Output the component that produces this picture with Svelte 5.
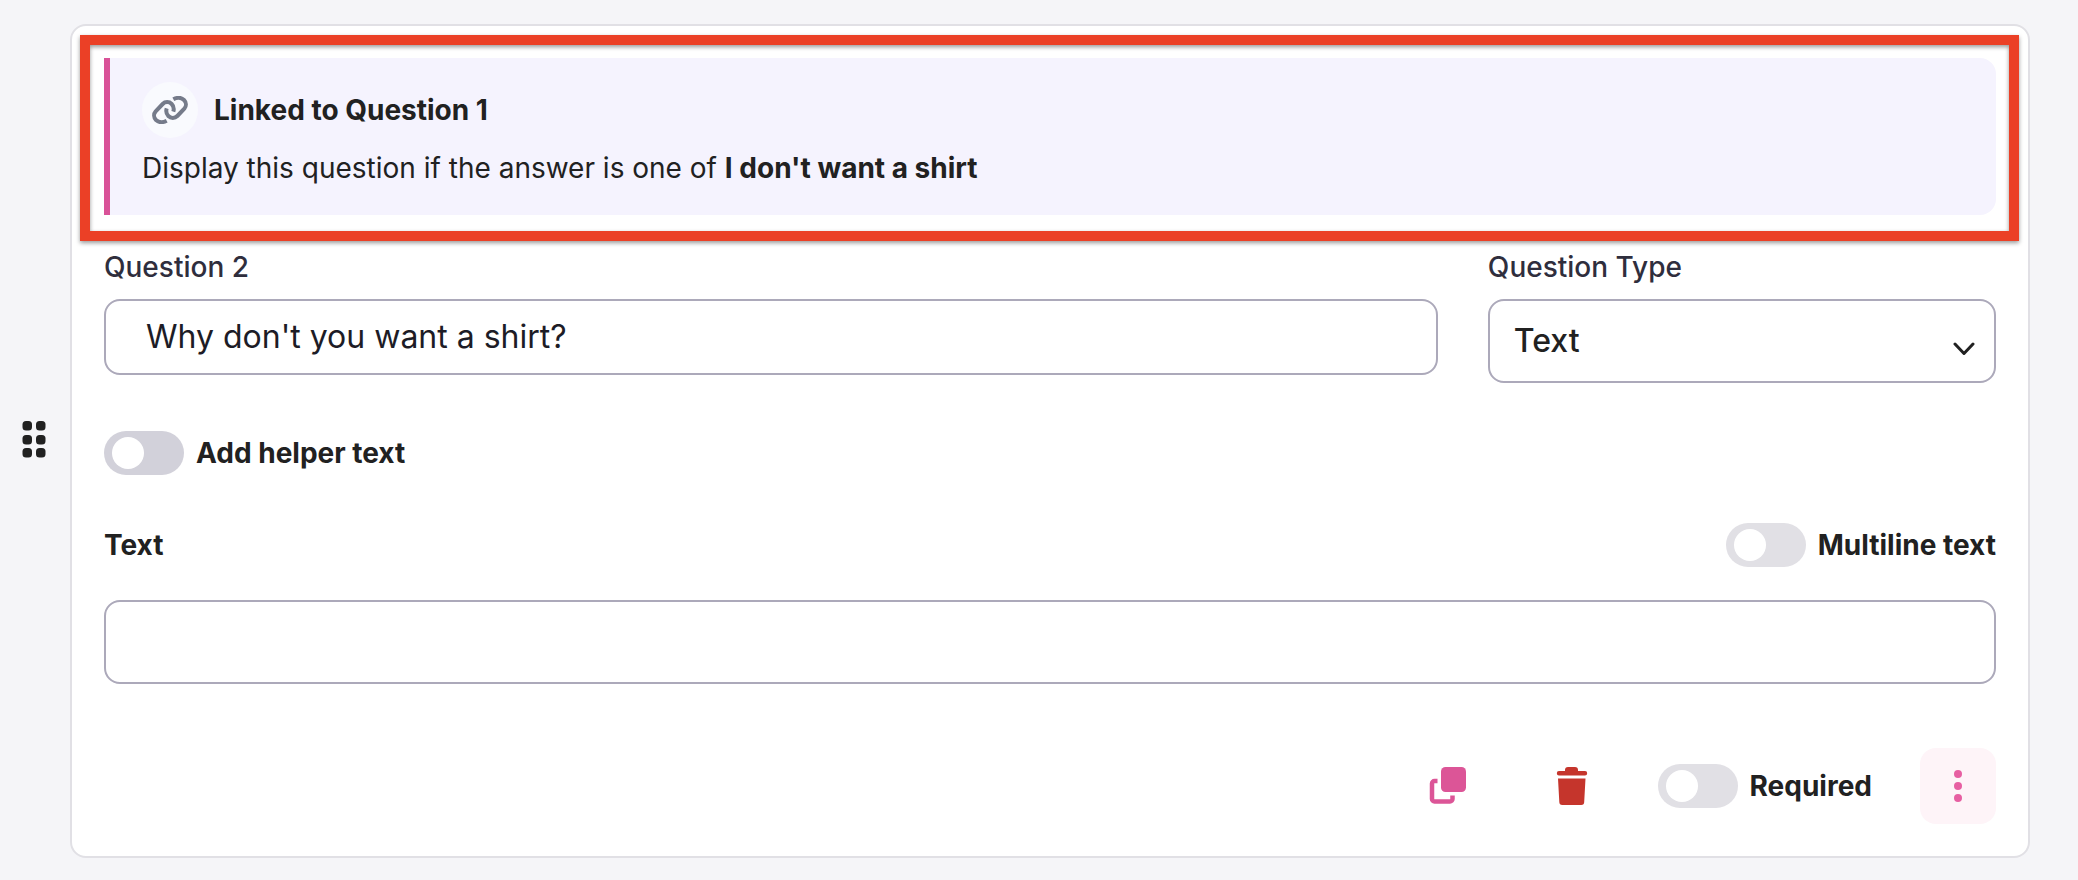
<script lang="ts">
  let question = "Why don't you want a shirt?";
  let questionType = 'Text';
  let answer = '';
  let helperText = false;
  let multiline = false;
  let required = false;

  const questionTypes = ['Text', 'Number', 'Date', 'Dropdown', 'Checkbox'];
</script>

<div class="question">
  <button class="drag" type="button" aria-label="Reorder question">
    <svg width="24" height="37" viewBox="0 0 24 37" fill="currentColor">
      {#each [0, 14, 27] as y}
        <rect x="0.500" {y} width="9.500" height="9.500" rx="3.500" />
        <rect x="14" {y} width="9.500" height="9.500" rx="3.500" />
      {/each}
    </svg>
  </button>

  <section class="card">
    <div class="linked">
      <div class="callout">
        <div class="callout-title">
          <span class="callout-icon">
            <svg
              width="36"
              height="28"
              viewBox="0 0 108 84"
              fill="none"
              stroke="currentColor"
              stroke-width="12"
              stroke-linejoin="round"
              aria-hidden="true"
            >
              <path d="M44 74Q25 84 12 72A19 19 0 0 1 11 46L32 24A19 19 0 0 1 59 24Q68 33 64 47" />
              <path
                d="M44 74Q25 84 12 72A19 19 0 0 1 11 46L32 24A19 19 0 0 1 59 24Q68 33 64 47"
                transform="rotate(180 54 42)"
              />
            </svg>
          </span>
          <strong>Linked to Question 1</strong>
        </div>
        <p>Display this question if the answer is one of <strong>I don't want a shirt</strong></p>
      </div>
    </div>

    <div class="fields">
      <div class="field">
        <label for="question">Question 2</label>
        <input id="question" class="box question-input" type="text" bind:value={question} />
      </div>
      <div class="field">
        <label for="question-type">Question Type</label>
        <div class="select-wrapper">
          <select id="question-type" class="box" bind:value={questionType}>
            {#each questionTypes as type}
              <option>{type}</option>
            {/each}
          </select>
          <svg class="chevron" width="22" height="14" viewBox="0 0 22 14" aria-hidden="true">
            <path
              d="M2 2l9 9.500 9-9.500"
              fill="none"
              stroke="currentColor"
              stroke-width="3"
              stroke-linecap="round"
              stroke-linejoin="round"
            />
          </svg>
        </div>
      </div>
    </div>

    <div class="row">
      <label class="toggle strong">
        <input type="checkbox" bind:checked={helperText} />
        <span>Add helper text</span>
      </label>
    </div>

    <div class="row">
      <label class="answer-label" for="answer">Text</label>
      <label class="toggle">
        <input type="checkbox" bind:checked={multiline} />
        <span>Multiline text</span>
      </label>
    </div>

    <input id="answer" class="box answer" type="text" bind:value={answer} />

    <div class="actions">
      <button class="icon-btn copy" type="button" aria-label="Duplicate question">
        <svg width="38" height="38" viewBox="0 0 38 38" aria-hidden="true">
          <rect x="12" y="0" width="25" height="25" rx="4.500" fill="currentColor" />
          <path
            d="M8.500 14H5.500a2.500 2.500 0 0 0-2.500 2.500v15.500a2.500 2.500 0 0 0 2.500 2.500h15.500a2.500 2.500 0 0 0 2.500-2.500v-3.500"
            fill="none"
            stroke="currentColor"
            stroke-width="4.500"
          />
        </svg>
      </button>
      <button class="icon-btn trash" type="button" aria-label="Delete question">
        <svg width="32" height="38" viewBox="0 0 32 38" fill="currentColor" aria-hidden="true">
          <path
            d="M9 4V3a3 3 0 0 1 3-3h7a3 3 0 0 1 3 3v1h7a2.200 2.200 0 0 1 0 4.400H3A2.200 2.200 0 0 1 3 4z"
          />
          <path d="M2 11.400h27.500l-1.300 23.600a3 3 0 0 1-3 3H6.300a3 3 0 0 1-3-3z" />
        </svg>
      </button>
      <label class="toggle">
        <input type="checkbox" bind:checked={required} />
        <span>Required</span>
      </label>
      <button class="icon-btn more" type="button" aria-label="More options">
        <svg width="8" height="32" viewBox="0 0 8 32" fill="currentColor" aria-hidden="true">
          <circle cx="4" cy="4" r="4" />
          <circle cx="4" cy="16" r="4" />
          <circle cx="4" cy="28" r="4" />
        </svg>
      </button>
    </div>
  </section>
</div>

<style>
  :global(body) {
    background: #f5f5f8;
  }

  .question {
    display: flex;
    padding: 24px 48px 22px 0;
    font-family: Inter, "Liberation Sans", sans-serif;
    font-size: 28px;
    line-height: 34px;
    color: #212121;
  }

  button {
    border: none;
    background: none;
    padding: 0;
    cursor: pointer;
  }

  .drag {
    flex: none;
    width: 70px;
    padding: 0 0 4px 22px;
    color: #212121;
    cursor: grab;
  }

  svg {
    display: block;
  }

  .card {
    flex: 1;
    min-width: 0;
    box-sizing: border-box;
    background: #fff;
    border: 2px solid #e1e0e5;
    border-radius: 16px;
    padding: 32px;
  }

  .linked {
    position: relative;
    margin-bottom: 35px;
  }

  .linked::after {
    content: "";
    position: absolute;
    inset: -23px -23px -26px -24px;
    border: 10px solid #eb4026;
    filter: drop-shadow(0 2px 2px rgba(0, 0, 0, 0.4));
    pointer-events: none;
  }

  .callout {
    display: flex;
    flex-direction: column;
    gap: 9px;
    background: #f5f3fe;
    border-left: 6px solid #d95298;
    border-radius: 0 16px 16px 0;
    padding: 24px 32px 26px;
  }

  .callout-title {
    display: flex;
    align-items: center;
    gap: 16px;
  }

  .callout-icon {
    display: flex;
    align-items: center;
    justify-content: center;
    width: 56px;
    height: 56px;
    border-radius: 50%;
    background: #f9fafe;
    color: #757b8a;
  }

  .callout p {
    margin: 0;
    line-height: 42px;
  }

  strong {
    font-weight: 700;
  }

  .fields {
    display: grid;
    grid-template-columns: 21fr 8fr;
    gap: 50px;
  }

  .field {
    display: flex;
    flex-direction: column;
    gap: 15px;
  }

  .field label {
    font-weight: 500;
    color: #2f2e3d;
  }

  .box {
    display: block;
    box-sizing: border-box;
    width: 100%;
    height: 84px;
    border: 2px solid #aca9ba;
    border-radius: 16px;
    background: #fff;
    color: #212121;
    font-family: inherit;
    font-size: 32px;
    padding: 0 24px 2px;
  }

  .question-input {
    height: 76px;
    padding: 0 40px 2px;
    color: #1d1c26;
  }

  .select-wrapper {
    position: relative;
  }

  select {
    appearance: none;
    font-weight: 500;
  }

  .chevron {
    position: absolute;
    right: 21px;
    top: 43px;
    pointer-events: none;
  }

  .row {
    display: flex;
    align-items: center;
    justify-content: space-between;
    margin-top: 48px;
  }

  .answer-label {
    font-weight: 700;
  }

  .answer {
    margin-top: 33px;
  }

  .toggle {
    display: flex;
    align-items: center;
    gap: 12px;
    font-weight: 700;
    cursor: pointer;
  }

  .toggle input {
    appearance: none;
    display: flex;
    align-items: center;
    box-sizing: border-box;
    width: 80px;
    height: 44px;
    margin: 0;
    padding: 0 8px;
    border-radius: 22px;
    background: #e1e0e5;
    cursor: pointer;
  }

  .toggle.strong input {
    background: #d2d1da;
  }

  .toggle input::before {
    content: "";
    width: 32px;
    height: 32px;
    border-radius: 50%;
    background: #fff;
  }

  .toggle input:checked {
    justify-content: flex-end;
    background: #dc5597;
  }

  .actions {
    display: flex;
    align-items: center;
    justify-content: flex-end;
    gap: 48px;
    margin-top: 64px;
  }

  .icon-btn {
    display: flex;
    align-items: center;
    justify-content: center;
    width: 76px;
    height: 76px;
    border-radius: 16px;
  }

  .copy {
    color: #dc5597;
  }

  .trash {
    color: #c5352c;
  }

  .more {
    background: #fef4f8;
    color: #e75fa2;
  }
</style>
